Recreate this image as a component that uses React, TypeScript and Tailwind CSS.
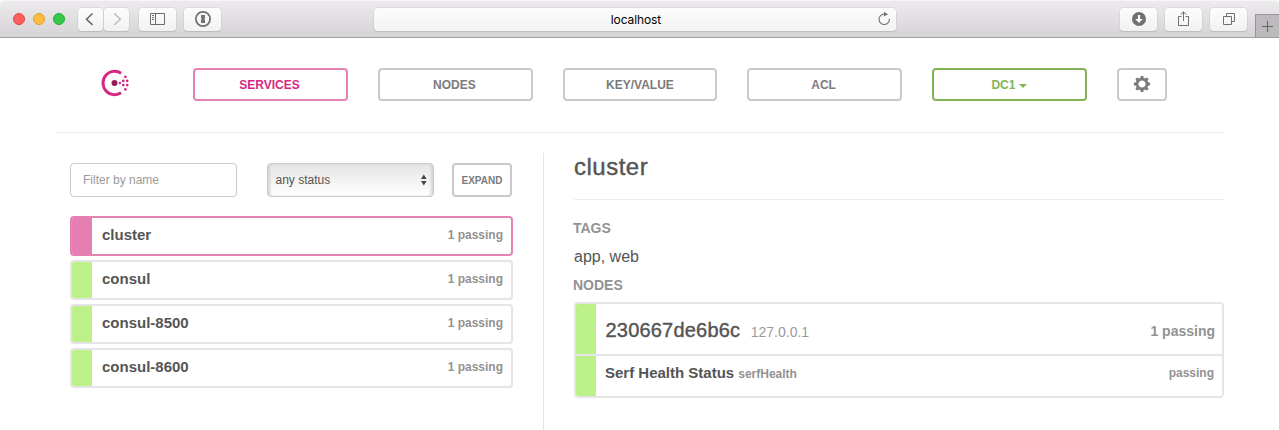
import React from "react";

type Service = { name: string; status: string; active?: boolean };

const services: Service[] = [
  { name: "cluster", status: "1 passing", active: true },
  { name: "consul", status: "1 passing" },
  { name: "consul-8500", status: "1 passing" },
  { name: "consul-8600", status: "1 passing" },
];

const chromeButton =
  "flex h-[23px] items-center justify-center rounded-[4px] bg-linear-to-b from-[#fdfdfd] to-[#f2f1f2] text-[#727272] shadow-[0_0_0_0.5px_#cfcdcf,0_1px_1px_#aaa8aa]";

function BrowserBar() {
  return (
    <div className="bg-[#f9f9f9]">
      <header className="flex h-[38px] items-start rounded-t-[5px] border-b border-[#a09ea0] bg-linear-to-b from-[#edebed] to-[#d5d3d5] shadow-[inset_0_1px_0_#f7f5f7]">
        <div className="mt-[13px] ml-[13px] flex gap-2">
          <span className="size-3 rounded-full border border-[#e2453f] bg-[#fc605c]" />
          <span className="size-3 rounded-full border border-[#dfa033] bg-[#fdbc40]" />
          <span className="size-3 rounded-full border border-[#27aa35] bg-[#34c84a]" />
        </div>
        <div className="mt-2 ml-[13px] flex gap-px">
          <button className={`${chromeButton} w-[25px]`}>
            <svg width="25" height="23" fill="none" stroke="#666" strokeWidth="1.5">
              <path d="M14.5 5.5 8.5 11.2l6 5.7" />
            </svg>
          </button>
          <button className={`${chromeButton} w-[25px]`}>
            <svg width="25" height="23" fill="none" stroke="#bdbdbd" strokeWidth="1.5">
              <path d="m10.3 5.5 6 5.7-6 5.7" />
            </svg>
          </button>
        </div>
        <button className={`${chromeButton} mt-2 ml-[10px] w-[37px]`}>
          <svg width="37" height="23" fill="none" stroke="#6d6d6d">
            <path d="M11.5 5.5h14v11h-14zM16.5 5.5v11M13 7.500h2M13 9.500h2M13 11.500h2" />
          </svg>
        </button>
        <button className={`${chromeButton} mt-2 ml-2 w-[37px]`}>
          <svg width="37" height="23" fill="none">
            <circle cx="19" cy="11" r="7.1" stroke="#707070" strokeWidth="1.8" />
            <path d="M17 7h4v3.400l-.8.7.8.8V15h-4v-3.300l.8-.7-.8-.8z" fill="#707070" />
          </svg>
        </button>
        <div className="mt-2 ml-[153px] flex h-[23px] w-[522px] items-center rounded-[4px] bg-linear-to-b from-[#fcfcfc] to-[#f4f3f4] shadow-[0_0_0_0.5px_#cfcdcf,0_1px_1px_#aaa8aa]">
          <span className="w-[28px]" />
          <span className="flex-1 pt-px pl-[2px] text-center font-[Inter] text-[12px] tracking-[-0.1px] text-black">
            localhost
          </span>
          <svg width="28" height="23" fill="none" stroke="#737373" strokeWidth="1.1">
            <path d="M21.400 10.700a5.200 5.200 0 1 1-5-4.600" />
            <path d="M16 3.700v4.700l4-2.200z" fill="#737373" stroke="none" />
          </svg>
        </div>
        <div className="mt-2 ml-auto flex gap-2">
          <button className={`${chromeButton} w-[37px]`}>
            <svg width="37" height="23">
              <circle cx="19" cy="11" r="7" fill="#707070" />
              <path d="M17.900 7h2.200v4h2.700L19 15l-3.800-4h2.700z" fill="#fff" />
            </svg>
          </button>
          <button className={`${chromeButton} w-[37px]`}>
            <svg width="37" height="23" fill="none" stroke="#707070">
              <path d="M16.500 8.500h-3v9h10v-9h-3M18.500 13V3.800M15.700 6.600l2.800-2.800 2.800 2.800" />
            </svg>
          </button>
          <button className={`${chromeButton} w-[37px]`}>
            <svg width="37" height="23" fill="none" stroke="#707070">
              <path d="M13.500 8.500h8v8h-8zM16.500 8V5.500h8v8H22" />
            </svg>
          </button>
        </div>
        <button className="mt-[14px] ml-2 flex h-[23px] w-6 border-t border-l border-[#969496] bg-[#bcbabc]">
          <svg width="23" height="22" stroke="#666">
            <path d="M6 11.500h11M11.500 6v11" />
          </svg>
        </button>
      </header>
    </div>
  );
}

function ConsulLogo() {
  return (
    <svg width="30" height="28" viewBox="0 0 30 28" fill="#d62783">
      <path d="M21.100 4.200A11.700 11.700 0 1 0 21.100 23.800" fill="none" stroke="#d62783" strokeWidth="2.900" />
      <circle cx="14.500" cy="14" r="3" fill="#961d59" />
      <circle cx="19.900" cy="14" r="1.250" />
      <circle cx="23.300" cy="11.900" r="1.350" />
      <circle cx="23.300" cy="16.100" r="1.350" />
      <circle cx="27.200" cy="11.900" r="1.350" />
      <circle cx="27.200" cy="16.100" r="1.350" />
      <circle cx="25.400" cy="7.900" r="1.350" />
      <circle cx="25.400" cy="20.300" r="1.350" />
    </svg>
  );
}

function Gear() {
  return (
    <svg width="18" height="18" viewBox="-9 -9 18 18" className="-translate-y-px text-[#7b7b7b]">
      <circle r="4.900" fill="none" stroke="currentColor" strokeWidth="2.600" />
      <g fill="currentColor">
        {[0, 45, 90, 135, 180, 225, 270, 315].map((angle) => (
          <path key={angle} d="M-2-5.500-1.200-8.100h2.400l.8 2.600z" transform={`rotate(${angle})`} />
        ))}
      </g>
    </svg>
  );
}

const navButton =
  "flex h-[33px] items-center justify-center rounded-[4px] border-2 text-[12px] font-bold";

function Navigation() {
  return (
    <nav className="mx-[55px] flex h-[95px] items-start border-b border-[#ededed] pt-[30px]">
      <a className="mt-px ml-[45px] w-[93px]">
        <ConsulLogo />
      </a>
      <div className="flex gap-[29.900px]">
        <button className={`${navButton} w-[155px] border-[#e681b4] text-[#d62783]`}>
          <span className="-translate-x-px">SERVICES</span>
        </button>
        <button className={`${navButton} w-[155px] border-[#cacaca] text-[#7b7b7b]`}>
          <span className="-translate-x-px">NODES</span>
        </button>
        <button className={`${navButton} w-[154.400px] border-[#cacaca] text-[#7b7b7b]`}>KEY/VALUE</button>
        <button className={`${navButton} w-[155px] border-[#cacaca] text-[#7b7b7b]`}>
          <span className="-translate-x-px">ACL</span>
        </button>
        <button className={`${navButton} w-[155px] gap-1 border-[#83b456] text-[#83b456]`}>
          DC1
          <svg width="8" height="4" className="mt-[3px]">
            <path d="M0 0h8L4 4z" fill="currentColor" />
          </svg>
        </button>
        <button className={`${navButton} w-[50px] border-[#cacaca]`}>
          <Gear />
        </button>
      </div>
    </nav>
  );
}

function ServiceRow({ name, status, active }: Service) {
  return (
    <li
      className={`flex h-10 overflow-hidden rounded-[4px] border-2 ${
        active ? "border-[#e681b4]" : "border-[#e5e5e5]"
      }`}
    >
      <span className={`w-5 ${active ? "bg-[#e57fb2]" : "bg-[#bcf089]"}`} />
      <div className="flex flex-1 items-start justify-between pt-[6px] pr-2 pl-[10px] leading-[22px]">
        <span className="text-[15px] font-bold text-[#555]">{name}</span>
        <span className="text-[12px] font-bold text-[#929292]">{status}</span>
      </div>
    </li>
  );
}

function ServiceList() {
  return (
    <section className="w-[488px] pt-[30px] pl-[15px]">
      <div className="flex h-[34px]">
        <input
          placeholder="Filter by name"
          className="w-[167px] rounded-[4px] border border-[#c8c9c8] px-3 text-[12px] outline-none placeholder:text-[#9a9a9a]"
        />
        <div className="ml-[30px] flex w-[167px] items-center justify-between rounded-[4px] border border-[#cbcbcb] bg-linear-to-b from-[#e5e5e5] to-white pr-[6px] pl-[7.500px] text-[12px] text-[#555] shadow-[inset_3px_0_3px_-1px_#d2d2d2,inset_-3px_0_3px_-1px_#d2d2d2]">
          any status
          <svg width="6" height="12" fill="#444">
            <path d="M0 5h5.600L2.800.6zM0 7h5.600L2.800 11.400z" />
          </svg>
        </div>
        <button className="ml-[18px] w-[60px] rounded-[4px] border-2 border-[#cacaca] text-[10px] font-bold text-[#7b7b7b]">
          EXPAND
        </button>
      </div>
      <ul className="mt-[19px] flex w-[443px] flex-col gap-1">
        {services.map((service) => (
          <ServiceRow key={service.name} {...service} />
        ))}
      </ul>
    </section>
  );
}

function ServiceDetail() {
  return (
    <section className="mt-5 flex-1 border-l border-[#e5e5e5] pl-[30px] font-bold text-[#929292]">
      <h1 className="h-[47px] border-b border-[#ededed] text-[24px] leading-7 font-normal tracking-[0.5px] text-[#555] [-webkit-text-stroke:0.4px_#555]">
        cluster
      </h1>
      <h2 className="mt-[18px] -ml-px text-[14px] leading-5">TAGS</h2>
      <p className="mt-[9px] text-[16px] leading-5 font-normal text-[#555]">app, web</p>
      <h2 className="mt-2 -ml-px text-[14px] leading-5">NODES</h2>
      <div className="mt-[7px] flex h-24 w-[650px] flex-col overflow-hidden rounded-[4px] border-2 border-[#e5e5e5]">
        <div className="flex h-[52px] border-b-2 border-[#e5e5e5]">
          <span className="w-5 bg-[#bcf089]" />
          <div className="flex flex-1 items-start pt-3 pr-[7px] pl-[9.500px] leading-7">
            <span className="text-[20px] font-normal tracking-[0.2px] text-[#555] [-webkit-text-stroke:0.4px_#555]">
              230667de6b6c
            </span>
            <span className="ml-[10.500px] pt-[2px] text-[14px] font-normal text-[#9a9a9a]">127.0.0.1</span>
            <span className="ml-auto pt-px text-[14px]">1 passing</span>
          </div>
        </div>
        <div className="flex flex-1">
          <span className="w-5 bg-[#bcf089]" />
          <div className="flex flex-1 items-start pt-[6px] pr-2 pl-[9px] leading-[22px]">
            <span className="text-[15px] text-[#555]">Serf Health Status</span>
            <span className="ml-1 pt-px text-[12px]">serfHealth</span>
            <span className="ml-auto text-[12px]">passing</span>
          </div>
        </div>
      </div>
    </section>
  );
}

export default function App() {
  return (
    <div className="flex h-[430px] w-[1279px] flex-col overflow-hidden bg-white font-['Liberation_Sans',Arial,sans-serif]">
      <BrowserBar />
      <Navigation />
      <main className="mx-[55px] flex flex-1">
        <ServiceList />
        <ServiceDetail />
      </main>
    </div>
  );
}
